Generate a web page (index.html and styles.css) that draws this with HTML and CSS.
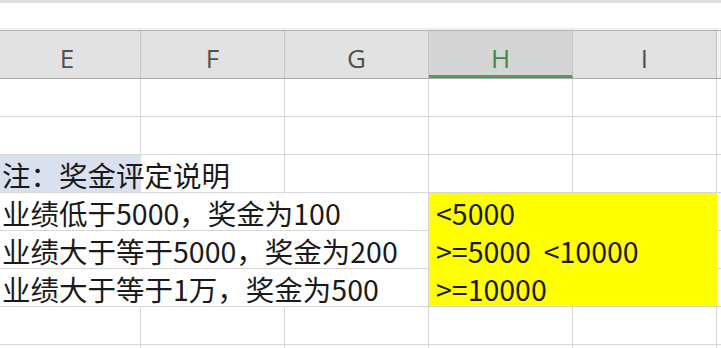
FILE: index.html
```html
<!DOCTYPE html>
<html lang="zh-CN">
<head>
  <meta charset="UTF-8" />
  <title>奖金评定</title>
  <link rel="stylesheet" href="styles.css">
</head>
<body>

  <!-- formula bar strip -->
  <div class="topbar"></div>

  <div class="sheet">
    <!-- column headers -->
    <div class="row head">
      <div class="col first">E</div>
      <div class="col">F</div>
      <div class="col">G</div>
      <div class="col active">H</div>
      <div class="col">I</div>
      <div class="col rest"></div>
    </div>

    <div class="row">
      <div class="cell first"></div><div class="cell"></div><div class="cell"></div>
      <div class="cell"></div><div class="cell"></div><div class="cell rest"></div>
    </div>
    <div class="row">
      <div class="cell first"></div><div class="cell"></div><div class="cell"></div>
      <div class="cell"></div><div class="cell"></div><div class="cell rest"></div>
    </div>

    <div class="row">
      <div class="cell first picked spill">注：奖金评定说明</div>
      <div class="cell"></div><div class="cell"></div>
      <div class="cell"></div><div class="cell"></div><div class="cell rest"></div>
    </div>
    <div class="row">
      <div class="cell first spill">业绩低于5000，奖金为100</div>
      <div class="cell spill"></div><div class="cell"></div>
      <div class="cell yellow spill">&lt;5000</div><div class="cell yellow"></div><div class="cell rest"></div>
    </div>
    <div class="row">
      <div class="cell first spill">业绩大于等于5000，奖金为200</div>
      <div class="cell spill"></div><div class="cell"></div>
      <div class="cell yellow spill">&gt;=5000&nbsp;&nbsp;&lt;10000</div><div class="cell yellow"></div><div class="cell rest"></div>
    </div>
    <div class="row">
      <div class="cell first spill">业绩大于等于1万，奖金为500</div>
      <div class="cell spill"></div><div class="cell"></div>
      <div class="cell yellow spill end">&gt;=10000</div><div class="cell yellow end"></div><div class="cell rest"></div>
    </div>

    <div class="row">
      <div class="cell first"></div><div class="cell"></div><div class="cell"></div>
      <div class="cell"></div><div class="cell"></div><div class="cell rest"></div>
    </div>
    <div class="row partial">
      <div class="cell first"></div><div class="cell"></div><div class="cell"></div>
      <div class="cell"></div><div class="cell"></div><div class="cell rest"></div>
    </div>
  </div>

</body>
</html>
```

FILE: styles.css
```css
* {
  box-sizing: border-box;
  margin: 0;
  padding: 0;
}

body, html {
  background: #ffffff;
  font-family: "Noto Sans CJK SC", "Noto Sans", sans-serif;
  width: 721px;
  height: 348px;
  overflow: hidden;
}

.topbar {
  height: 30px;
  border-top: 3px solid #dedede;
  border-bottom: 2px solid #f0f0f0;
  background: #ffffff;
}

.sheet {
  width: 721px;
  height: 318px;
  overflow: hidden;
}

.row {
  display: flex;
  height: 38px;
}

.row.partial {
  height: 3px;
}

/* column headers */
.head {
  height: 49px;
  background: #e2e2e2;
  border-top: 1px solid #b4b4b4;
  border-bottom: 1px solid #a9a9a9;
}

.col {
  flex: none;
  width: 144px;
  border-right: 1px solid #c4c4c4;
  text-align: center;
  font-family: "Open Sans", "Noto Sans", sans-serif;
  font-size: 26px;
  line-height: 46px;
  padding-top: 4px;
  color: #505050;
}

.col.first {
  width: 141px;
  padding-right: 6px;
}

.col.active {
  background: #d5d5d5;
  color: #3f8a47;
  border-bottom: 3px solid #4f9d55;
}

.col.rest {
  width: 4px;
  background: #f2f2f2;
  border-right: none;
  border-left: 1px solid #c4c4c4;
  margin-left: -1px;
}

/* cells */
.cell {
  flex: none;
  width: 144px;
  height: 38px;
  border-right: 1px solid #d6d6d6;
  border-bottom: 1px solid #d6d6d6;
  padding: 0 6px;
  font-size: 28.5px;
  line-height: 40px;
  color: #1a1a1a;
  white-space: nowrap;
}

.cell.first {
  width: 141px;
  padding-left: 2px;
}

.cell.rest {
  width: 4px;
  border-right: none;
}

.row.partial .cell {
  height: 3px;
  border-bottom: none;
}

.cell.spill {
  position: relative;
  z-index: 1;
  border-right-color: transparent;
  overflow: visible;
}

.cell.picked {
  background: #d9e1f1;
}

.cell.yellow {
  background: #ffff00;
  border-color: #ffff00;
  padding-left: 7px;
}

.cell.yellow.end {
  border-bottom-color: #d6d6d6;
}
```
